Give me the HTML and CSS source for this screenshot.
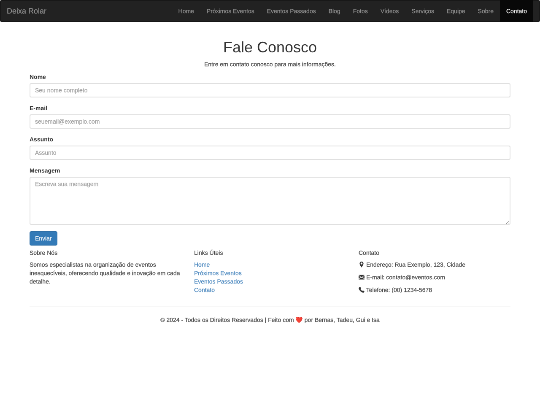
FILE: index.html
```html
<!DOCTYPE html>
<html lang="pt-br">

<head>
    <meta charset="utf-8">
    <meta name="viewport" content="width=device-width, initial-scale=1.0">
    <title>Deixa Rolar - Contato</title>
    <link rel="stylesheet" href="styles.css">
</head>

<body>
    <div class="viewport">
        <div class="page">
            <nav class="navbar">
                <a class="navbar-brand" href="#">Deixa Rolar</a>
                <ul class="navbar-nav">
                    <li><a href="#">Home</a></li>
                    <li><a href="#">Próximos Eventos</a></li>
                    <li><a href="#">Eventos Passados</a></li>
                    <li><a href="#">Blog</a></li>
                    <li><a href="#">Fotos</a></li>
                    <li><a href="#">Vídeos</a></li>
                    <li><a href="#">Serviços</a></li>
                    <li><a href="#">Equipe</a></li>
                    <li><a href="#">Sobre</a></li>
                    <li class="active"><a href="#">Contato</a></li>
                </ul>
            </nav>

            <div class="container">
                <h1>Fale Conosco</h1>
                <p class="text-center">Entre em contato conosco para mais informações.</p>
                <form>
                    <div class="form-group">
                        <label for="nome">Nome</label>
                        <input type="text" class="form-control" id="nome" placeholder="Seu nome completo">
                    </div>
                    <div class="form-group">
                        <label for="email">E-mail</label>
                        <input type="email" class="form-control" id="email" placeholder="seuemail@exemplo.com">
                    </div>
                    <div class="form-group">
                        <label for="assunto">Assunto</label>
                        <input type="text" class="form-control" id="assunto" placeholder="Assunto">
                    </div>
                    <div class="form-group">
                        <label for="mensagem">Mensagem</label>
                        <textarea class="form-control" id="mensagem" rows="5" placeholder="Escreva sua mensagem"></textarea>
                    </div>
                    <button type="submit" class="btn">Enviar</button>
                </form>
            </div>

            <footer class="container">
                <div class="row">
                    <div class="col">
                        <h5>Sobre Nós</h5>
                        <p>Somos especialistas na organização de eventos inesquecíveis, oferecendo qualidade e inovação em cada detalhe.</p>
                    </div>
                    <div class="col">
                        <h5>Links Úteis</h5>
                        <ul>
                            <li><a href="#">Home</a></li>
                            <li><a href="#">Próximos Eventos</a></li>
                            <li><a href="#">Eventos Passados</a></li>
                            <li><a href="#">Contato</a></li>
                        </ul>
                    </div>
                    <div class="col">
                        <h5>Contato</h5>
                        <p><svg class="icon" viewBox="0 0 14 14"><path fill-rule="evenodd" d="M7 0a4.600 4.600 0 0 0-4.600 4.600C2.400 8 7 14 7 14s4.600-6 4.600-9.400A4.600 4.600 0 0 0 7 0zM7 2.300a2.300 2.300 0 1 1 0 4.600 2.300 2.300 0 0 1 0-4.600z"/></svg> Endereço: Rua Exemplo, 123, Cidade</p>
                        <p><svg class="icon" viewBox="0 0 14 14"><path d="M0 1.500h14L7 7.500zM0 3l4.300 3.700L0 10.500zM14 3L9.700 6.700 14 10.500zM5.200 7.500L7 9l1.800-1.500L14 12.500H0z"/></svg> E-mail: contato@eventos.com</p>
                        <p><svg class="icon" viewBox="0 0 14 14"><path d="M1 1.500L3 .2c.5-.3.900-.2 1.200.3l1.500 2.600c.3.500.1.900-.3 1.200l-1 .8c.8 1.900 2.500 3.700 4.500 4.600l.8-1.100c.3-.4.800-.5 1.200-.2l2.500 1.700c.4.300.5.700.2 1.200l-1.400 1.900c-.6.800-2.400.6-4.200-.3C4.300 11 1.500 7.800.4 4.400 0 3.100.2 2.100 1 1.500z"/></svg> Telefone: (00) 1234-5678</p>
                    </div>
                </div>
                <hr>
                <p class="text-center">© 2024 - Todos os Direitos Reservados | Feito com ❤️ por Bernas, Tadeu, Gui e Isa</p>
            </footer>
        </div>
    </div>
</body>

</html>
```
FILE: styles.css
```css
* {
    box-sizing: border-box;
}

body {
    margin: 0;
    background: #fff;
}

.viewport {
    width: 100%;
    height: 100vh;
    overflow: hidden;
}

/* 1280px layout shown in a 540px window */
.page {
    width: 1280px;
    font-family: "Liberation Sans", Arial, "Noto Color Emoji", sans-serif;
    font-size: 14px;
    line-height: 20px;
    color: #444;
    -webkit-text-stroke: .25px;
    text-rendering: geometricPrecision;
    transform: scale(.421875);
    transform-origin: 0 0;
    will-change: transform;
}

a {
    color: #4785bd;
    text-decoration: none;
}

ul {
    margin: 0;
    padding: 0;
    list-style: none;
}

p {
    margin: 0 0 10px;
}

.navbar {
    display: flex;
    justify-content: space-between;
    height: 52px;
    padding: 0 15px;
    margin-bottom: 40px;
    background: #222;
    border: 1px solid #080808;
    border-radius: 4px;
}

.navbar a {
    display: block;
    padding: 15px;
    color: #929292;
}

.navbar .navbar-brand {
    padding-left: 0;
    font-size: 18px;
}

.navbar-nav {
    display: flex;
}

.navbar .active a {
    color: #eee;
    background: #080808;
}

.container {
    width: 1140px;
    margin: 0 auto;
}

h1 {
    margin: 0 0 10px;
    font-size: 36px;
    font-weight: 500;
    line-height: 1.1;
    text-align: center;
    color: #333;
    -webkit-text-stroke: 0;
}

h5 {
    margin: 10px 0;
    font-size: 14px;
    font-weight: 500;
    line-height: 1.1;
}

.text-center {
    text-align: center;
}

.form-group {
    margin-bottom: 15px;
}

.form-group label {
    display: block;
    margin-bottom: 5px;
    font-weight: bold;
    color: #333;
    -webkit-text-stroke: 0;
}

.form-control {
    display: block;
    width: 100%;
    height: 34px;
    margin: 0;
    padding: 5px 11px;
    font: inherit;
    color: #555;
    background: #fff;
    border: 2px solid #e0e0e0;
    border-radius: 4px;
}

.form-control::placeholder {
    color: #a0a0a0;
}

textarea.form-control {
    height: 114px;
    resize: vertical;
}

.btn {
    display: block;
    height: 34px;
    padding: 6px 12px;
    font: inherit;
    color: #eef4f9;
    background: #337ab7;
    border: 1px solid #2e6da4;
    border-radius: 4px;
}

.row {
    display: flex;
    gap: 30px;
}

.col {
    width: 360px;
}

.icon {
    display: inline-block;
    width: 14px;
    height: 14px;
    vertical-align: -2px;
    fill: #333;
}

hr {
    margin: 19px 0 20px;
    border: 0;
    border-top: 2px solid #f7f7f7;
}
```
